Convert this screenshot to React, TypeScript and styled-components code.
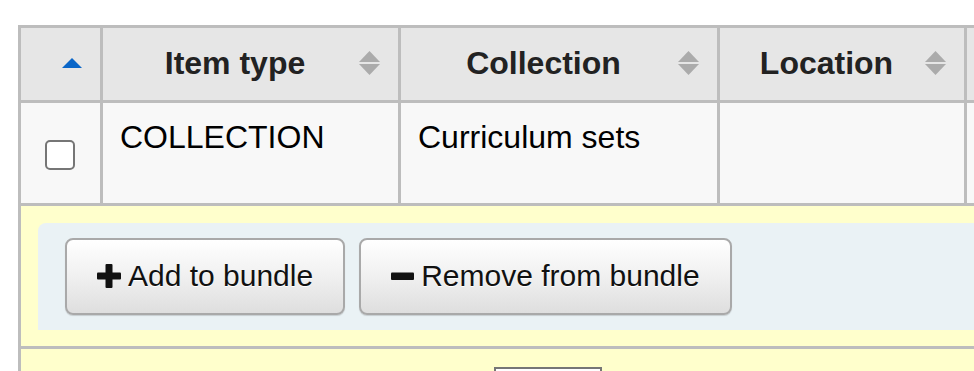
import React from 'react';
import styled, { createGlobalStyle } from 'styled-components';

const GlobalStyle = createGlobalStyle`
    html, body {
        margin: 0;
        padding: 0;
        background: #fff;
        overflow: hidden;
    }
    body {
        font-family: "Liberation Sans", Arial, sans-serif;
        color: #000;
    }
`

const Page = styled.div`
    padding: 25px 0 0 18px;
    width: 1300px;
`

const Table = styled.table`
    border-collapse: separate;
    border-spacing: 3px;
    background: #bdbdbd;
    table-layout: fixed;
    width: 1152px;
    margin: -3px 0 0 0;
    position: relative;
    top: 3px;
`

const HeadCell = styled.th<{ $w: number }>`
    width: ${p => p.$w}px;
    height: 72px;
    box-sizing: border-box;
    padding: 0 18px 2px 16px;
    background: #e6e6e6;
    font-size: 32px;
    font-weight: 700;
    color: #222;
    vertical-align: middle;
`

const HeadInner = styled.div`
    display: flex;
    align-items: center;
    gap: 8px;
`

const HeadLabel = styled.span`
    flex: 1;
    text-align: center;
    white-space: nowrap;
`

const Cell = styled.td<{ $center?: boolean }>`
    height: 100px;
    box-sizing: border-box;
    padding: 16px 17px;
    background: #f8f8f8;
    font-size: 32px;
    vertical-align: ${p => (p.$center ? 'middle' : 'top')};
    text-align: ${p => (p.$center ? 'center' : 'left')};
    white-space: nowrap;
`

const Check = styled.input`
    appearance: none;
    width: 30px;
    height: 30px;
    margin: 0 0 0 -1px;
    box-sizing: border-box;
    border: 2px solid #767676;
    border-radius: 5px;
    background: #fff;
    vertical-align: middle;
`

const BundleCell = styled.td`
    background: #ffffcc;
    padding: 16px 0 16px 17px;
    height: 140px;
    box-sizing: border-box;
`

const Toolbar = styled.div`
    display: flex;
    gap: 14px;
    background: #eaf2f5;
    border-radius: 8px 0 0 0;
    padding: 15px 27px;
`

const Button = styled.button`
    display: flex;
    align-items: center;
    gap: 7px;
    height: 77px;
    box-sizing: border-box;
    padding: 0 30px;
    border: 2px solid #a9a9a9;
    border-radius: 8px;
    background: linear-gradient(to bottom, #ffffff 0%, #f0f0f0 50%, #dedede 100%);
    box-shadow: 0 1px 1px rgba(0, 0, 0, 0.15);
    font-family: "Liberation Sans", Arial, sans-serif;
    font-size: 30px;
    color: #111;
    text-shadow: 0 1px 0 #fff;
    white-space: nowrap;
`

const FootCell = styled.td`
    background: #ffffcc;
    height: 60px;
    padding: 18px 0 0 473px;
    vertical-align: top;
`

const PageInput = styled.input`
    width: 108px;
    height: 36px;
    box-sizing: border-box;
    border: 2px solid #767676;
    background: #fff;
    display: block;
`

const SortIcon = ({ active }: { active?: boolean }) =>
  active ? (
    <svg width="20" height="10" viewBox="0 0 20 10">
      <polygon points="10,0 20,10 0,10" fill="#0a66c8" />
    </svg>
  ) : (
    <svg width="21" height="24" viewBox="0 0 21 24">
      <polygon points="10.5,0 21,11 0,11" fill="#ababab" />
      <polygon points="0,13 21,13 10.5,24" fill="#ababab" />
    </svg>
  );

const PlusIcon = () => (
  <svg width="24" height="24" viewBox="0 0 24 24">
    <rect x="8.5" y="0" width="7" height="24" rx="1" fill="#111" />
    <rect x="0" y="8.5" width="24" height="7" rx="1" fill="#111" />
  </svg>
);

const MinusIcon = () => (
  <svg width="23" height="24" viewBox="0 0 23 24">
    <rect x="0" y="8.5" width="23" height="7.5" rx="1" fill="#111" />
  </svg>
);

const columns = [
  { key: 'select', w: 79, label: '', active: true },
  { key: 'itype', w: 295, label: 'Item type' },
  { key: 'ccode', w: 316, label: 'Collection' },
  { key: 'loc', w: 244, label: 'Location' },
  { key: 'more', w: 200, label: '' },
];

const App = () => {
  return (
    <Page>
      <GlobalStyle />
      <Table>
        <thead>
          <tr>
            {columns.map(c => (
              <HeadCell key={c.key} $w={c.w}>
                <HeadInner>
                  <HeadLabel>{c.label}</HeadLabel>
                  <SortIcon active={c.active} />
                </HeadInner>
              </HeadCell>
            ))}
          </tr>
        </thead>
        <tbody>
          <tr>
            <Cell $center>
              <Check type="checkbox" />
            </Cell>
            <Cell>COLLECTION</Cell>
            <Cell>Curriculum sets</Cell>
            <Cell></Cell>
            <Cell></Cell>
          </tr>
          <tr>
            <BundleCell colSpan={5}>
              <Toolbar>
                <Button>
                  <PlusIcon />
                  Add to bundle
                </Button>
                <Button>
                  <MinusIcon />
                  Remove from bundle
                </Button>
              </Toolbar>
            </BundleCell>
          </tr>
          <tr>
            <FootCell colSpan={5}>
              <PageInput type="text" />
            </FootCell>
          </tr>
        </tbody>
      </Table>
    </Page>
  );
}

export default App;
